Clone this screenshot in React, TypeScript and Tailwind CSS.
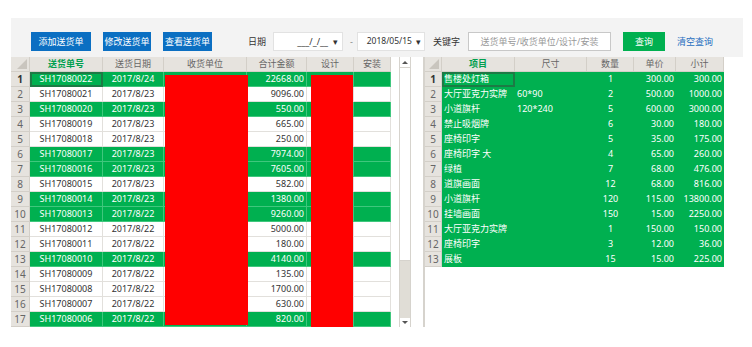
import React from "react";

const leftRows: [string, string, string, boolean][] = [
  ["SH17080022", "2017/8/24", "22668.00", true],
  ["SH17080021", "2017/8/23", "9096.00", false],
  ["SH17080020", "2017/8/23", "550.00", true],
  ["SH17080019", "2017/8/23", "665.00", false],
  ["SH17080018", "2017/8/23", "250.00", false],
  ["SH17080017", "2017/8/23", "7974.00", true],
  ["SH17080016", "2017/8/23", "7605.00", true],
  ["SH17080015", "2017/8/23", "582.00", false],
  ["SH17080014", "2017/8/23", "1380.00", true],
  ["SH17080013", "2017/8/22", "9260.00", true],
  ["SH17080012", "2017/8/22", "5000.00", false],
  ["SH17080011", "2017/8/22", "180.00", false],
  ["SH17080010", "2017/8/22", "4140.00", true],
  ["SH17080009", "2017/8/22", "135.00", false],
  ["SH17080008", "2017/8/22", "1700.00", false],
  ["SH17080007", "2017/8/22", "630.00", false],
  ["SH17080006", "2017/8/22", "820.00", true],
];

const rightRows: [string, string, string, string, string][] = [
  ["售楼处灯箱", "", "1", "300.00", "300.00"],
  ["大厅亚克力实牌", "60*90", "2", "500.00", "1000.00"],
  ["小道旗杆", "120*240", "5", "600.00", "3000.00"],
  ["禁止吸烟牌", "", "6", "30.00", "180.00"],
  ["座椅印字", "", "5", "35.00", "175.00"],
  ["座椅印字 大", "", "4", "65.00", "260.00"],
  ["绿植", "", "7", "68.00", "476.00"],
  ["道旗画面", "", "12", "68.00", "816.00"],
  ["小道旗杆", "", "120", "115.00", "13800.00"],
  ["挂墙画面", "", "150", "15.00", "2250.00"],
  ["大厅亚克力实牌", "", "1", "150.00", "150.00"],
  ["座椅印字", "", "3", "12.00", "36.00"],
  ["展板", "", "15", "15.00", "225.00"],
];

function Corner() {
  return (
    <div className="relative h-[15px] bg-[#e6e3de] border-r border-b border-[#d3cfc8]">
      <div className="absolute right-[2px] bottom-[2px] w-0 h-0 border-l-[10px] border-l-transparent border-b-[10px] border-b-[#c9c5be]" />
    </div>
  );
}

function Head({ label, active }: { label: string; active?: boolean }) {
  return (
    <div
      className={
        active
          ? "h-[15px] bg-[#e6e3de] border-r border-b border-[#d3cfc8] text-center leading-[14px] font-bold text-[#00a050]"
          : "h-[15px] bg-[#e6e3de] border-r border-b border-[#d3cfc8] text-center leading-[14px] text-[#666]"
      }
    >
      {label}
    </div>
  );
}

function RowNum({ n }: { n: number }) {
  return (
    <div
      className={
        n === 1
          ? "h-[15px] bg-[#e6e3de] border-r border-b border-[#d3cfc8] text-center leading-[14px] text-[10px] font-bold text-[#333]"
          : "h-[15px] bg-[#e6e3de] border-r border-b border-[#d3cfc8] text-center leading-[14px] text-[10px] text-[#666]"
      }
    >
      {n}
    </div>
  );
}

function LeftGrid() {
  return (
    <div className="relative w-[380px] h-[270px] bg-white">
      <div className="grid grid-cols-[19px_73px_61px_83px_60px_47px_37px]">
        <Corner />
        <Head label="送货单号" active />
        <Head label="送货日期" />
        <Head label="收货单位" />
        <Head label="合计金额" />
        <Head label="设计" />
        <Head label="安装" />
        {leftRows.map(([no, date, amt, green], i) => {
          const cell = green
            ? "h-[15px] bg-[#00b050] text-white border-r border-b border-[#3fc77d] leading-[14px] whitespace-nowrap"
            : "h-[15px] bg-white text-[#333] border-r border-b border-[#e2e0dc] leading-[14px] whitespace-nowrap";
          return (
            <React.Fragment key={no}>
              <RowNum n={i + 1} />
              <div className={cell + " text-center" + (i === 0 ? " outline outline-2 -outline-offset-2 outline-[#1d7a45]" : "")}>{no}</div>
              <div className={cell + " text-center"}>{date}</div>
              <div className={cell} />
              <div className={cell + " text-right pr-[2px]"}>{amt}</div>
              <div className={cell} />
              <div className={cell} />
            </React.Fragment>
          );
        })}
      </div>
      {/* redacted columns */}
      <div className="absolute left-[154px] top-[18px] w-[83px] h-[250px] bg-[#ff0000]" />
      <div className="absolute left-[300px] top-[18px] w-[42px] h-[252px] bg-[#ff0000]" />
    </div>
  );
}

function ScrollBar() {
  return (
    <div className="w-[12px] h-[270px] flex flex-col border-l border-r border-[#d6d3cd] bg-white">
      <div className="h-[10px] flex items-center justify-center">
        <div className="w-0 h-0 border-l-[3px] border-l-transparent border-r-[3px] border-r-transparent border-b-[3px] border-b-[#555]" />
      </div>
      <div className="h-[194px] border-t border-b border-[#d6d3cd] bg-white" />
      <div className="flex-1 bg-[#e0ddd6]" />
      <div className="h-[9px] flex items-center justify-center">
        <div className="w-0 h-0 border-l-[3px] border-l-transparent border-r-[3px] border-r-transparent border-t-[3px] border-t-[#555]" />
      </div>
    </div>
  );
}

function RightGrid() {
  return (
    <div className="w-[301px] h-[270px] border-l-2 border-[#d6d3cd] bg-white">
      <div className="grid grid-cols-[17px_73px_72px_47px_42px_48px]">
        <Corner />
        <Head label="项目" active />
        <Head label="尺寸" />
        <Head label="数量" />
        <Head label="单价" />
        <Head label="小计" />
        {rightRows.map(([item, size, qty, price, sub], i) => {
          const cell = "h-[15px] bg-[#00b050] text-white leading-[14px] whitespace-nowrap border-b border-[#00b050]";
          return (
            <React.Fragment key={i}>
              <RowNum n={i + 1} />
              <div className={cell + " pl-[2px]" + (i === 0 ? " outline outline-2 -outline-offset-2 outline-[#1d7a45]" : "")}>{item}</div>
              <div className={cell + " pl-[2px]"}>{size}</div>
              <div className={cell + " text-center"}>{qty}</div>
              <div className={cell + " text-right pr-[2px]"}>{price}</div>
              <div className={cell + " text-right pr-[2px]"}>{sub}</div>
            </React.Fragment>
          );
        })}
      </div>
    </div>
  );
}

export default function App() {
  return (
    <div className="w-[752px] h-[347px] bg-white font-['Noto_Sans','Noto_Sans_CJK_SC',sans-serif] text-[9px] overflow-hidden">
      <div className="h-[18px]" />
      <div className="ml-[11px] w-[732px]">
        {/* toolbar */}
        <div className="h-[39px] bg-[#f3f3f3] flex items-start pt-[14px] pl-[20px]">
          <button className="w-[60px] h-[19px] bg-[#0b6fc2] text-white text-[9px]">添加送货单</button>
          <button className="ml-[12px] w-[48px] h-[19px] bg-[#0b6fc2] text-white text-[9px]">修改送货单</button>
          <button className="ml-[12px] w-[49px] h-[19px] bg-[#0b6fc2] text-white text-[9px]">查看送货单</button>
          <span className="ml-[36px] h-[19px] leading-[19px] text-[#333]">日期</span>
          <div className="ml-[7px] w-[70px] h-[19px] bg-white border border-[#e2e2e2] flex items-center justify-end pr-[4px] text-[#333]">
            <span className="mr-[5px]">___/_/__</span>
            <span className="text-[9px]">▾</span>
          </div>
          <span className="ml-[7px] h-[19px] leading-[19px] text-[#888]">-</span>
          <div className="ml-[4px] w-[68px] h-[19px] bg-white border border-[#e2e2e2] flex items-center justify-end pr-[3px] text-[#333]">
            <span className="mr-[4px] text-[8.5px]">2018/05/15</span>
            <span className="text-[9px]">▾</span>
          </div>
          <span className="ml-[8px] h-[19px] leading-[19px] text-[#333]">关键字</span>
          <div className="ml-[8px] w-[143px] h-[19px] bg-white border border-[#c8c8c8] flex items-center justify-center text-[#999]">
            送货单号/收货单位/设计/安装
          </div>
          <button className="ml-[12px] w-[42px] h-[19px] bg-[#00b050] text-white text-[9px]">查询</button>
          <span className="ml-[12px] h-[19px] leading-[19px] text-[#1f6fbf]">清空查询</span>
        </div>
        {/* grids */}
        <div className="flex items-start">
          <LeftGrid />
          <div className="w-[8px]" />
          <ScrollBar />
          <div className="w-[12px]" />
          <RightGrid />
        </div>
      </div>
    </div>
  );
}
